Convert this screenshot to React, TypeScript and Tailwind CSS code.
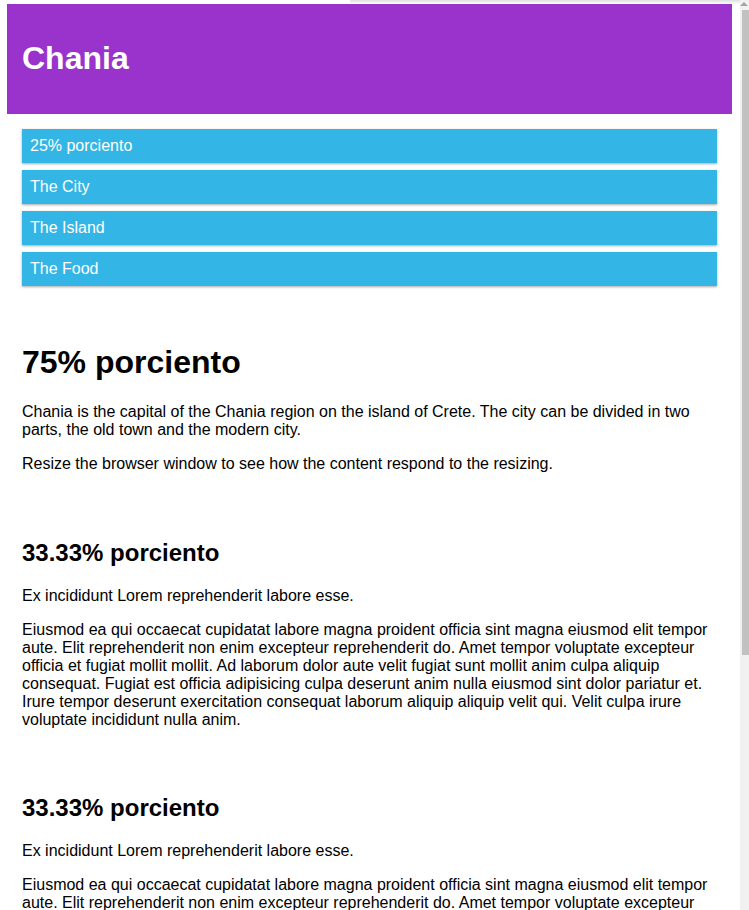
const menuItems = ['25% porciento', 'The City', 'The Island', 'The Food'];

const lorem =
  'Eiusmod ea qui occaecat cupidatat labore magna proident officia sint magna eiusmod elit tempor aute. Elit reprehenderit non enim excepteur reprehenderit do. Amet tempor voluptate excepteur officia et fugiat mollit mollit. Ad laborum dolor aute velit fugiat sunt mollit anim culpa aliquip consequat. Fugiat est officia adipisicing culpa deserunt anim nulla eiusmod sint dolor pariatur et. Irure tempor deserunt exercitation consequat laborum aliquip aliquip velit qui. Velit culpa irure voluptate incididunt nulla anim.';

function Aside() {
  return (
    <div className="p-[15px]">
      <h2 className="my-[19.92px] text-[24px] font-bold leading-[28px]">33.33% porciento</h2>
      <p className="my-4">Ex incididunt Lorem reprehenderit labore esse.</p>
      <p className="my-4">{lorem}</p>
    </div>
  );
}

export default function App() {
  return (
    <div
      className="min-h-screen bg-white text-black text-[16px] leading-[18px]"
      style={{ fontFamily: '"Liberation Sans", Arial, sans-serif' }}
    >
      <div className="w-[740px] pl-[7px] pr-[8px]">
        {/* top shadow strip */}
        <div className="h-[4px] ml-[343px] -mr-[8px] bg-gradient-to-b from-[#dedede] to-white" />

        {/* Header */}
        <div className="bg-[#9933cc] text-white p-[15px]">
          <h1 className="my-[21.44px] text-[32px] font-bold leading-[37px]">Chania</h1>
        </div>

        {/* Menu */}
        <div className="p-[15px]">
          <ul className="m-0 p-0 list-none">
            {menuItems.map((item) => (
              <li
                key={item}
                className="p-2 mb-[7px] bg-[#33b5e5] text-white shadow-[0_1px_3px_rgba(0,0,0,0.12),0_1px_2px_rgba(0,0,0,0.24)]"
              >
                {item}
              </li>
            ))}
          </ul>
        </div>

        {/* Main */}
        <div className="p-[15px]">
          <h1 className="my-[21.44px] text-[32px] font-bold leading-[37px]">75% porciento</h1>
          <p className="my-4">
            Chania is the capital of the Chania region on the island of Crete. The city can be
            divided in two parts, the old town and the modern city.
          </p>
          <p className="my-4">
            Resize the browser window to see how the content respond to the resizing.
          </p>
        </div>

        <Aside />
        <Aside />

        <div className="bg-[#0099cc] text-white text-center text-[12px] p-[15px]">
          <p className="my-3">Resize the browser window to see how the content respond to the resizing.</p>
        </div>
      </div>

      {/* scrollbar */}
      <div className="fixed right-0 top-0 h-full w-[9px] bg-[#f1f1f1]">
        <div className="h-[10px] flex items-start justify-end pt-[2px] pr-[1px]">
          <div className="w-0 h-0 border-l-[4px] border-r-[4px] border-b-[4px] border-l-transparent border-r-transparent border-b-[#a3a3a3]" />
        </div>
        <div className="ml-[2px] h-[645px] bg-[#c1c1c1]" />
      </div>
    </div>
  );
}
